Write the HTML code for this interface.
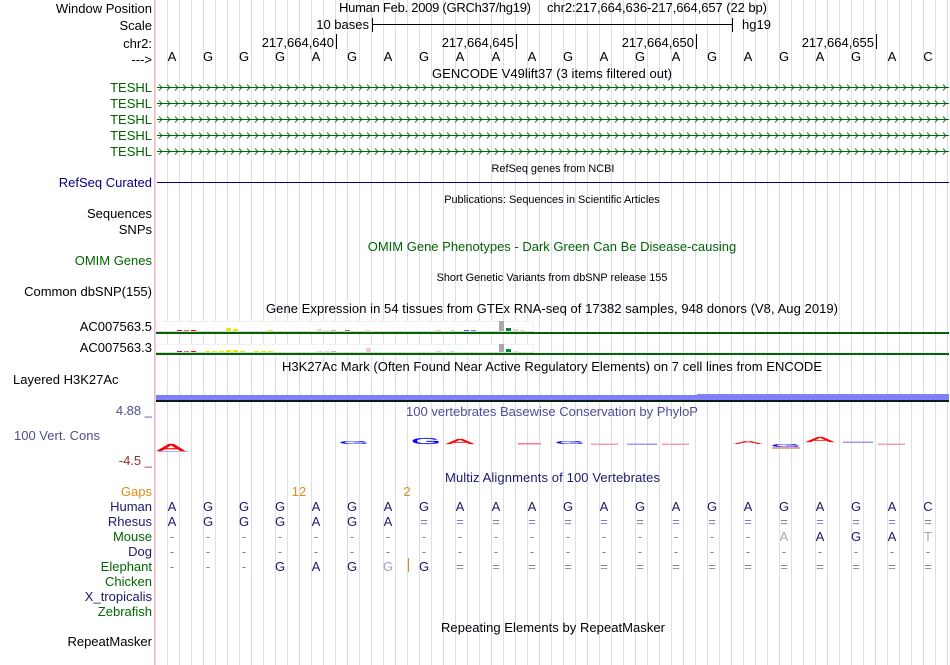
<!DOCTYPE html>
<html><head><meta charset="utf-8"><style>
html,body{margin:0;padding:0;background:#fff;width:950px;height:665px;overflow:hidden}
svg{display:block}
text{font-family:"Liberation Sans",sans-serif;font-size:13px;fill:#000;white-space:pre}
.r{text-anchor:end}.c{text-anchor:middle}
.g{fill:#006400}.n{fill:#000080}.b{fill:#191970}.s{font-size:10.9px}
.o{fill:#e48b17}.f{fill:#7f7fb8}.p{fill:#a3a3c8}
.l{font-size:12px}
.la{fill:#f00;stroke:#f00;stroke-width:.3}
.lg{fill:#00f;stroke:#00f;stroke-width:.3}
</style></head><body>
<svg width="950" height="665" viewBox="0 0 950 665" xmlns="http://www.w3.org/2000/svg">
<defs>
<pattern id="grid" x="167" y="0" width="12" height="665" patternUnits="userSpaceOnUse"><rect x="0" y="0" width="1" height="665" fill="#dcdcf3"/></pattern>
<pattern id="chev2" x="0" y="0" width="8" height="9" patternUnits="userSpaceOnUse"><path d="M2 1.500L5 4.500L2 7.500" fill="none" stroke="#2a7a2a" stroke-width="1"/></pattern>
</defs>
<rect x="155" y="0" width="794" height="665" fill="url(#grid)"/>
<rect x="154" y="0" width="1" height="665" fill="#ffb4b4"/>

<!-- header -->
<text class="r" x="152" y="13">Window Position</text>
<text class="r" x="152" y="30">Scale</text>
<text class="r" x="152" y="48">chr2:</text>
<text class="r" x="152" y="64">---&gt;</text>
<text x="339" y="12" textLength="192">Human Feb. 2009 (GRCh37/hg19)</text>
<text x="547" y="12" textLength="220">chr2:217,664,636-217,664,657 (22 bp)</text>
<text class="r" x="369" y="29">10 bases</text>
<rect x="372" y="18" width="1" height="14" fill="#000"/><rect x="372" y="24" width="361" height="1" fill="#000"/><rect x="732" y="18" width="1" height="14" fill="#000"/>
<text x="742" y="29">hg19</text>
<text class="r" x="334" y="47">217,664,640</text><rect x="336" y="34" width="1" height="15" fill="#000"/>
<text class="r" x="514" y="47">217,664,645</text><rect x="516" y="34" width="1" height="15" fill="#000"/>
<text class="r" x="694" y="47">217,664,650</text><rect x="696" y="34" width="1" height="15" fill="#000"/>
<text class="r" x="874" y="47">217,664,655</text><rect x="876" y="34" width="1" height="15" fill="#000"/>
<text class="c" x="172 208 244 280 316 352 388 424 460 496 532 568 604 640 676 712 748 784 820 856 892 928" y="61">AGGGAGAGAAAGAGAGAGAGAC</text>
<text x="432" y="78" textLength="240">GENCODE V49lift37 (3 items filtered out)</text>

<!-- TESHL -->
<text class="r g" x="152" y="92">TESHL</text>
<text class="r g" x="152" y="108">TESHL</text>
<text class="r g" x="152" y="124">TESHL</text>
<text class="r g" x="152" y="140">TESHL</text>
<text class="r g" x="152" y="156">TESHL</text>
<svg x="157" y="83" width="792" height="9"><rect width="792" height="9" fill="url(#chev2)"/></svg>
<svg x="157" y="99" width="792" height="9"><rect width="792" height="9" fill="url(#chev2)"/></svg>
<svg x="157" y="115" width="792" height="9"><rect width="792" height="9" fill="url(#chev2)"/></svg>
<svg x="157" y="131" width="792" height="9"><rect width="792" height="9" fill="url(#chev2)"/></svg>
<svg x="157" y="147" width="792" height="9"><rect width="792" height="9" fill="url(#chev2)"/></svg>
<g fill="#006400">
<rect x="157" y="87" width="792" height="1"/><rect x="157" y="103" width="792" height="1"/><rect x="157" y="119" width="792" height="1"/><rect x="157" y="135" width="792" height="1"/><rect x="157" y="151" width="792" height="1"/>
</g>

<!-- mid tracks -->
<text class="c s" x="553" y="172">RefSeq genes from NCBI</text>
<text class="r n" x="152" y="187">RefSeq Curated</text>
<rect x="157" y="182" width="792" height="1" fill="#000080"/>
<text class="c s" x="552" y="203">Publications: Sequences in Scientific Articles</text>
<text class="r" x="152" y="218">Sequences</text>
<text class="r" x="152" y="234">SNPs</text>
<text class="c g" x="552" y="251">OMIM Gene Phenotypes - Dark Green Can Be Disease-causing</text>
<text class="r g" x="152" y="265">OMIM Genes</text>
<text class="c s" x="552" y="281">Short Genetic Variants from dbSNP release 155</text>
<text class="r" x="152" y="296">Common dbSNP(155)</text>
<text x="266" y="313" textLength="572">Gene Expression in 54 tissues from GTEx RNA-seq of 17382 samples, 948 donors (V8, Aug 2019)</text>

<!-- GTEx -->
<text class="r" x="152" y="331">AC007563.5</text>
<text class="r" x="152" y="352">AC007563.3</text>
<rect x="156.500" y="321.500" width="377" height="10" fill="#fff" stroke="#f0f0f0"/>
<rect x="156" y="331" width="378" height="1" fill="#d8d8d8"/>
<rect x="156" y="332" width="793" height="2" fill="#006400"/>
<rect x="156.500" y="344.500" width="377" height="8" fill="#fff" stroke="#f0f0f0"/>
<rect x="156" y="352" width="378" height="1" fill="#d8d8d8"/>
<rect x="156" y="353" width="793" height="2" fill="#006400"/>
<g>
<rect x="177" y="330" width="5" height="1" fill="#8b1a6b"/><rect x="184" y="330" width="5" height="1" fill="#f06a5a"/><rect x="191" y="330" width="5" height="1" fill="#f00000"/>
<rect x="226" y="328" width="5" height="3" fill="#e8e800"/><rect x="233" y="329" width="5" height="2" fill="#e8e800"/><rect x="268" y="330" width="5" height="1" fill="#e8e800"/>
<rect x="317" y="329" width="5" height="2" fill="#efd4d4"/><rect x="324" y="330" width="5" height="1" fill="#efd4d4"/><rect x="331" y="330" width="5" height="1" fill="#cdb7a0"/><rect x="345" y="330" width="5" height="1" fill="#8b6f5f"/>
<rect x="366" y="330" width="5" height="1" fill="#f2d4d4"/><rect x="436" y="330" width="5" height="1" fill="#f5c5c5"/><rect x="450" y="330" width="5" height="1" fill="#b7e8b7"/>
<rect x="464" y="330" width="5" height="1" fill="#3366cc"/><rect x="471" y="330" width="5" height="1" fill="#4f94e8"/>
<rect x="499" y="321" width="5" height="10" fill="#aaaaaa"/><rect x="506" y="328" width="5" height="3" fill="#008b45"/><rect x="513" y="329" width="5" height="2" fill="#efd4d4"/><rect x="520" y="330" width="5" height="1" fill="#efd4d4"/>

<rect x="177" y="351" width="5" height="1" fill="#8b1a6b"/><rect x="184" y="351" width="5" height="1" fill="#f06a5a"/><rect x="191" y="351" width="5" height="1" fill="#f00000"/>
<rect x="205" y="351" width="5" height="1" fill="#e8e800"/><rect x="212" y="351" width="5" height="1" fill="#e8e800"/><rect x="219" y="351" width="5" height="1" fill="#e8e800"/>
<rect x="226" y="350" width="5" height="2" fill="#e8e800"/><rect x="233" y="350" width="5" height="2" fill="#e8e800"/><rect x="240" y="351" width="5" height="1" fill="#e8e800"/>
<rect x="254" y="351" width="5" height="1" fill="#e8e800"/><rect x="261" y="351" width="5" height="1" fill="#e8e800"/><rect x="268" y="351" width="5" height="1" fill="#e8e800"/>
<rect x="317" y="351" width="5" height="1" fill="#efd4d4"/><rect x="324" y="351" width="5" height="1" fill="#efd4d4"/><rect x="331" y="351" width="5" height="1" fill="#cdb7a0"/>
<rect x="366" y="348" width="5" height="4" fill="#f2cccc"/><rect x="436" y="351" width="5" height="1" fill="#f5c5c5"/><rect x="450" y="351" width="5" height="1" fill="#b7e8b7"/>
<rect x="499" y="344" width="5" height="8" fill="#aaaaaa"/><rect x="506" y="349" width="5" height="3" fill="#008b45"/><rect x="513" y="351" width="5" height="1" fill="#efd4d4"/>
</g>

<!-- H3K27Ac -->
<text x="282" y="371" textLength="540">H3K27Ac Mark (Often Found Near Active Regulatory Elements) on 7 cell lines from ENCODE</text>
<text x="13" y="384">Layered H3K27Ac</text>
<rect x="156" y="395" width="793" height="5" fill="#8080ff"/>
<rect x="697" y="394" width="252" height="1" fill="#8080ff"/>
<rect x="156" y="400" width="793" height="2" fill="#0a1f0a"/>

<!-- conservation -->
<text class="r f" x="152" y="415" style="fill:#4d4d99">4.88 _</text>
<text x="14" y="440" style="fill:#4d4d99">100 Vert. Cons</text>
<text class="r" x="152" y="465" style="fill:#8c3333">-4.5 _</text>
<text class="c" x="552" y="416" style="fill:#4d4d99">100 vertebrates Basewise Conservation by PhyloP</text>

<g>
<rect x="158" y="451" width="30" height="1" fill="#b0b0f0"/>
<text class="l la" transform="translate(157,451) scale(3.5,.82)">A</text>
<text class="l lg" transform="translate(339,444) scale(3.2,.35)">G</text>
<text class="l lg" transform="translate(411,444) scale(3.2,.72)">G</text>
<text class="l la" transform="translate(446,444) scale(3.5,.6)">A</text>
<rect x="518" y="443" width="23" height="1.500" fill="#f08080"/>
<text class="l lg" transform="translate(555,444) scale(3.2,.35)">G</text>
<rect x="591" y="443.500" width="27" height="1.500" fill="#f4a0a0"/>
<rect x="627" y="443.500" width="30" height="1.500" fill="#9a9af0"/>
<rect x="662" y="443.500" width="27" height="1.500" fill="#f4a0a0"/>
<text class="l la" transform="translate(734,444) scale(3.5,.38)">A</text>
<text class="l lg" transform="translate(771,447) scale(3.2,.35)">G</text>
<rect x="772" y="447" width="28" height="1" fill="#f29a9a"/>
<rect x="772" y="448" width="28" height="1" fill="#d8b870"/>
<text class="l la" transform="translate(806,442) scale(3.5,.62)">A</text>
<rect x="843" y="441.500" width="30" height="1.500" fill="#9a9af0"/>
<rect x="878" y="443.500" width="27" height="1.500" fill="#f4a0a0"/>
</g>

<!-- multiz -->
<text x="445" y="482" textLength="215" style="fill:#191970">Multiz Alignments of 100 Vertebrates</text>
<text class="r o" x="152" y="496">Gaps</text>
<text class="c o" x="299" y="496">12</text>
<text class="c o" x="407" y="496">2</text>
<text class="r b" x="152" y="511">Human</text>
<text class="r b" x="152" y="526">Rhesus</text>
<text class="r g" x="152" y="541">Mouse</text>
<text class="r b" x="152" y="556">Dog</text>
<text class="r g" x="152" y="571">Elephant</text>
<text class="r g" x="152" y="586">Chicken</text>
<text class="r b" x="152" y="601">X_tropicalis</text>
<text class="r g" x="152" y="616">Zebrafish</text>
<text class="r" x="152" y="646">RepeatMasker</text>
<text x="441" y="632" textLength="224">Repeating Elements by RepeatMasker</text>

<text class="c b" x="172 208 244 280 316 352 388 424 460 496 532 568 604 640 676 712 748 784 820 856 892 928" y="511">AGGGAGAGAAAGAGAGAGAGAC</text>
<text class="c b" x="172 208 244 280 316 352 388" y="526">AGGGAGA</text>
<text class="c f" x="424 460 496 532 568 604 640 676 712 748 784 820 856 892 928" y="526">===============</text>
<text class="c f" x="172 208 244 280 316 352 388 424 460 496 532 568 604 640 676 712 748" y="541">-----------------</text>
<text class="c p" x="784" y="541">A</text>
<text class="c b" x="820 856 892" y="541">AGA</text>
<text class="c p" x="928" y="541">T</text>
<text class="c f" x="172 208 244 280 316 352 388 424 460 496 532 568 604 640 676 712 748 784 820 856 892 928" y="556">----------------------</text>
<text class="c f" x="172 208 244" y="571">---</text>
<text class="c b" x="280 316 352" y="571">GAG</text>
<text class="c p" x="388" y="571">G</text>
<rect x="408" y="558" width="1" height="14" fill="#e48b17"/>
<text class="c b" x="424" y="571">G</text>
<text class="c f" x="460 496 532 568 604 640 676 712 748 784 820 856 892 928" y="571">==============</text>
</svg>
</body></html>
